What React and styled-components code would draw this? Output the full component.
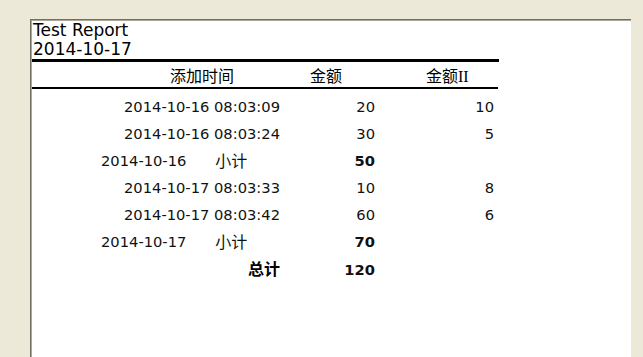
import React from "react";
import styled, { createGlobalStyle } from "styled-components";

const Global = createGlobalStyle`
  html, body { margin: 0; padding: 0; background: #ece9d8; }
  body { font-family: "DejaVu Sans", "Noto Sans CJK SC", sans-serif; color: #000; }
`;

const Page = styled.div`
  height: 357px;
  box-sizing: border-box;
  padding: 19px 12px 0 30px;
  overflow: hidden;
  display: flex;
`;

const Panel = styled.div`
  flex: 1;
  background: #fff;
  border-top: 1px solid #716f64;
  border-left: 1px solid #716f64;
  box-shadow: inset 1px 1px 0 #aca899;
  padding: 1px 0 0 1px;
`;

const Report = styled.div`
  width: 467px;
`;

const Title = styled.div`
  font-family: "DejaVu Sans", sans-serif;
  font-size: 17px;
  line-height: 19px;
  padding-left: 1px;
`;

const Rule = styled.div`
  height: ${(p) => p.$h}px;
  width: ${(p) => p.$w}px;
  background: #000;
`;

const Row = styled.div`
  display: grid;
  grid-template-columns: 248px 95px 119px;
  height: ${(p) => p.$h || 27}px;
  align-items: center;
`;

const HeaderRow = styled(Row)`
  align-items: start;
  padding-top: 7px;
  box-sizing: border-box;
  font-family: "Liberation Serif", "Noto Sans CJK SC", serif;
  font-size: 16px;
  line-height: 16px;
`;

const HeadCell = styled.div`
  padding-left: ${(p) => p.$pad}px;
  white-space: nowrap;
`;

const Body = styled.div`
  margin-top: 4px;
`;

const Cell = styled.div`
  text-align: right;
  font-size: 14.7px;
  line-height: 27px;
  font-weight: ${(p) => (p.$bold ? 700 : 400)};
  white-space: nowrap;
  color: #111;
`;

const SubCell = styled.div`
  display: flex;
  align-items: center;
  padding-left: 69px;
  font-size: 14.7px;
  line-height: 27px;
  color: #111;
`;

const Label = styled.span`
  font-family: "Noto Sans CJK SC", sans-serif;
  font-size: 16px;
  font-weight: ${(p) => (p.$bold ? 700 : 400)};
  margin-left: ${(p) => p.$ml || 0}px;
`;

const TotalCell = styled.div`
  text-align: right;
  line-height: 27px;
`;

const rows = [
  { type: "d", t: "2014-10-16 08:03:09", a: "20", b: "10" },
  { type: "d", t: "2014-10-16 08:03:24", a: "30", b: "5" },
  { type: "s", t: "2014-10-16", a: "50" },
  { type: "d", t: "2014-10-17 08:03:33", a: "10", b: "8" },
  { type: "d", t: "2014-10-17 08:03:42", a: "60", b: "6" },
  { type: "s", t: "2014-10-17", a: "70" },
];

export default function App() {
  return (
    <>
      <Global />
      <Page>
        <Panel>
          <Report>
            <Title>
              Test Report
              <br />
              2014-10-17
            </Title>
            <Rule $h={3} $w={467} />
            <HeaderRow $h={25}>
              <HeadCell $pad={138}>添加时间</HeadCell>
              <HeadCell $pad={30}>金额</HeadCell>
              <HeadCell $pad={51}>金额II</HeadCell>
            </HeaderRow>
            <Rule $h={2} $w={466} />
            <Body>
              {rows.map((r, i) =>
                r.type === "d" ? (
                  <Row key={i}>
                    <Cell>{r.t}</Cell>
                    <Cell>{r.a}</Cell>
                    <Cell>{r.b}</Cell>
                  </Row>
                ) : (
                  <Row key={i}>
                    <SubCell>
                      {r.t}
                      <Label $ml={29}>小计</Label>
                    </SubCell>
                    <Cell $bold>{r.a}</Cell>
                    <Cell />
                  </Row>
                )
              )}
              <Row>
                <TotalCell>
                  <Label $bold>总计</Label>
                </TotalCell>
                <Cell $bold>120</Cell>
                <Cell />
              </Row>
            </Body>
          </Report>
        </Panel>
      </Page>
    </>
  );
}
